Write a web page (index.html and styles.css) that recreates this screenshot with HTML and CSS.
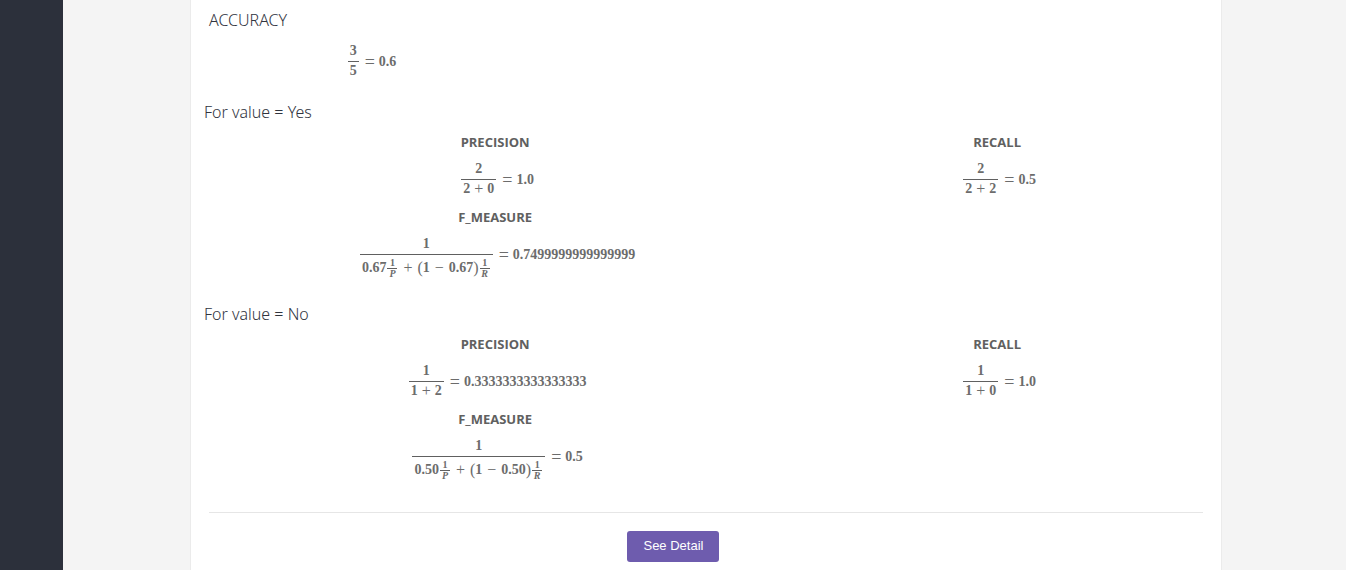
FILE: index.html
```html
<!DOCTYPE html>
<html lang="en">
<head>
<meta charset="utf-8">
<title>Model evaluation</title>
<link rel="stylesheet" href="styles.css">
</head>
<body>
<div class="layout">
  <aside class="sidebar"></aside>
  <main class="content">
    <div class="card">
      <section class="accuracy">
        <h2 class="heading">ACCURACY</h2>
        <div class="formula"><span class="frac"><span class="num">3</span><span class="den">5</span></span><span class="eq">=</span>0.6</div>
      </section>

      <section class="value">
        <h2 class="heading">For value = Yes</h2>
        <div class="metrics">
          <div class="metric">
            <h3 class="label">PRECISION</h3>
            <div class="formula"><span class="frac"><span class="num">2</span><span class="den">2<span class="op">+</span>0</span></span><span class="eq">=</span>1.0</div>
          </div>
          <div class="metric">
            <h3 class="label">RECALL</h3>
            <div class="formula"><span class="frac"><span class="num">2</span><span class="den">2<span class="op">+</span>2</span></span><span class="eq">=</span>0.5</div>
          </div>
          <div class="metric">
            <h3 class="label">F_MEASURE</h3>
            <div class="formula"><span class="frac"><span class="num">1</span><span class="den tall">0.67<span class="small"><span>1</span><i>P</i></span><span class="op">+</span><span class="paren">(</span>1<span class="op">−</span>0.67<span class="paren">)</span><span class="small"><span>1</span><i>R</i></span></span></span><span class="eq">=</span>0.7499999999999999</div>
          </div>
        </div>
      </section>

      <section class="value">
        <h2 class="heading">For value = No</h2>
        <div class="metrics">
          <div class="metric">
            <h3 class="label">PRECISION</h3>
            <div class="formula"><span class="frac"><span class="num">1</span><span class="den">1<span class="op">+</span>2</span></span><span class="eq">=</span>0.3333333333333333</div>
          </div>
          <div class="metric">
            <h3 class="label">RECALL</h3>
            <div class="formula"><span class="frac"><span class="num">1</span><span class="den">1<span class="op">+</span>0</span></span><span class="eq">=</span>1.0</div>
          </div>
          <div class="metric">
            <h3 class="label">F_MEASURE</h3>
            <div class="formula"><span class="frac"><span class="num">1</span><span class="den tall">0.50<span class="small"><span>1</span><i>P</i></span><span class="op">+</span><span class="paren">(</span>1<span class="op">−</span>0.50<span class="paren">)</span><span class="small"><span>1</span><i>R</i></span></span></span><span class="eq">=</span>0.5</div>
          </div>
        </div>
      </section>

      <div class="footer">
        <button class="button" type="button">See Detail</button>
      </div>
    </div>
  </main>
</div>
</body>
</html>
```

FILE: styles.css
```css
* {
  box-sizing: border-box;
}

body {
  margin: 0;
  background: #f4f4f4;
  color: #606060;
  font-family: "Open Sans", "Noto Sans", sans-serif;
}

.layout {
  display: flex;
  min-height: 100vh;
}

.sidebar {
  flex: 0 0 63px;
  background: #2c303b;
}

.content {
  flex: 1;
  display: flex;
  padding: 0 124px 0 127px;
}

.card {
  flex: 1;
  padding: 8px 18px;
  background: #fff;
  border: solid #ebebeb;
  border-width: 0 1px;
}

.heading {
  margin: 0;
  font-family: "Noto Sans", "Open Sans", sans-serif;
  font-size: 16px;
  font-weight: 300;
  line-height: 24px;
  color: #30343e;
}

.accuracy .formula {
  width: 33%;
  margin-top: 5px;
  padding-right: 2px;
}

.value {
  margin: 13px -10px 0 -5px;
}

.value + .value {
  margin-top: 22px;
}

.metrics {
  display: grid;
  grid-template-columns: 57fr 43fr;
  margin-top: 6px;
  padding-left: 5px;
}

.metric .formula {
  padding-left: 5px;
}

.label {
  margin: 0;
  font-size: 13px;
  font-weight: 700;
  line-height: 25px;
  text-align: center;
}

.formula {
  display: flex;
  justify-content: center;
  align-items: center;
  height: 50px;
  padding-bottom: 1px;
  font-family: "Liberation Serif", serif;
  font-size: 14px;
  font-weight: 700;
  line-height: 16px;
  color: #6c6c6c;
}

.frac {
  display: flex;
  flex-direction: column;
}

.num,
.den {
  display: flex;
  justify-content: center;
  height: 24px;
  padding: 0 2px;
}

.num {
  align-items: flex-end;
  padding-bottom: 2px;
}

.den {
  height: 25px;
  padding-top: 1px;
  border-top: 1px solid #606060;
}

.tall {
  align-items: center;
  padding-top: 2px;
}

.op {
  margin: 0 4px;
  font-size: 16px;
  font-weight: 400;
}

.tall .op {
  margin: 0 5px;
}

.eq {
  margin: 0 4px 0 6px;
  font-size: 18px;
  font-weight: 400;
}

.paren {
  font-size: 16px;
  font-weight: 400;
}

.small {
  display: flex;
  flex-direction: column;
  width: 10px;
  margin: 0 1px;
  font-size: 10px;
  line-height: 10px;
  text-align: center;
}

.small i {
  border-top: 1px solid #606060;
}

.footer {
  margin-top: 30px;
  padding-top: 18px;
  border-top: 1px solid #e6e6e6;
}

.button {
  height: 31px;
  margin-left: 42.1%;
  padding: 0 16px 2px;
  border: 0;
  border-radius: 3px;
  background: #6e5cae;
  color: #fff;
  font-family: "Liberation Sans", Arial, sans-serif;
  font-size: 13px;
}
```
